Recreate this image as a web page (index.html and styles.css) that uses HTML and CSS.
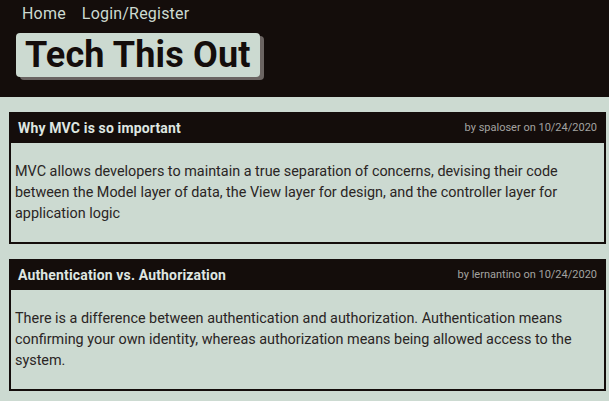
FILE: index.html
```html
<!DOCTYPE html>
<html>
<head>
<meta charset="utf-8">
<link rel="stylesheet" href="styles.css">
</head>
<body>
<header class="site-header">
  <nav class="nav">
    <a class="nav-link" href="#">Home</a>
    <a class="nav-link" href="#">Login/Register</a>
  </nav>
  <h1 class="brand">Tech This Out</h1>
</header>
<main class="posts">
  <article class="post">
    <div class="post-head">
      <h2 class="post-title">Why MVC is so important</h2>
      <span class="post-meta">by spaloser on 10/24/2020</span>
    </div>
    <div class="post-body">MVC allows developers to maintain a true separation of concerns, devising their code between the Model layer of data, the View layer for design, and the controller layer for application logic</div>
  </article>
  <article class="post">
    <div class="post-head">
      <h2 class="post-title">Authentication vs. Authorization</h2>
      <span class="post-meta">by lernantino on 10/24/2020</span>
    </div>
    <div class="post-body">There is a difference between authentication and authorization. Authentication means confirming your own identity, whereas authorization means being allowed access to the system.</div>
  </article>
</main>
</body>
</html>
```
FILE: styles.css
```css
* { box-sizing: border-box; }
html, body { margin: 0; padding: 0; }
body {
  background: #ccdad1;
  font-family: Roboto, "Noto Sans", sans-serif;
  color: #1a1413;
}
.site-header {
  background: #140d0b;
  height: 97px;
  padding: 4px 0 0 16px;
}
.nav {
  display: flex;
  gap: 16px;
  padding-left: 6px;
}
.nav-link {
  color: #ccdad1;
  text-decoration: none;
  font-size: 16px;
  line-height: 20px;
  letter-spacing: 0.2px;
}
.brand {
  display: inline-block;
  margin: 9px 0 0 0;
  background: #ccdad1;
  color: #140d0b;
  font-size: 36px;
  font-weight: 700;
  line-height: 44px;
  letter-spacing: 0.15px;
  padding: 0 9px 0 9px;
  border-radius: 4px;
  box-shadow: 4px 3px 0 #6b6462;
}
.posts {
  display: flex;
  flex-direction: column;
  gap: 15px;
  padding: 15px 3px 0 9px;
}
.post {
  display: flex;
  flex-direction: column;
}
.post-head {
  background: #140d0b;
  height: 31px;
  display: flex;
  align-items: center;
  justify-content: space-between;
  padding: 0 9px 0 9px;
}
.post-title {
  margin: 0;
  color: #dfe6e1;
  font-size: 14px;
  font-weight: 700;
  letter-spacing: 0.15px;
}
.post-meta {
  color: #a3a3a0;
  font-size: 11px;
}
.post-body {
  border: 2px solid #140d0b;
  border-top: none;
  padding: 18px 4px 18px 4px;
  font-size: 14.4px;
  line-height: 21px;
  color: #2a2524;
}
```
